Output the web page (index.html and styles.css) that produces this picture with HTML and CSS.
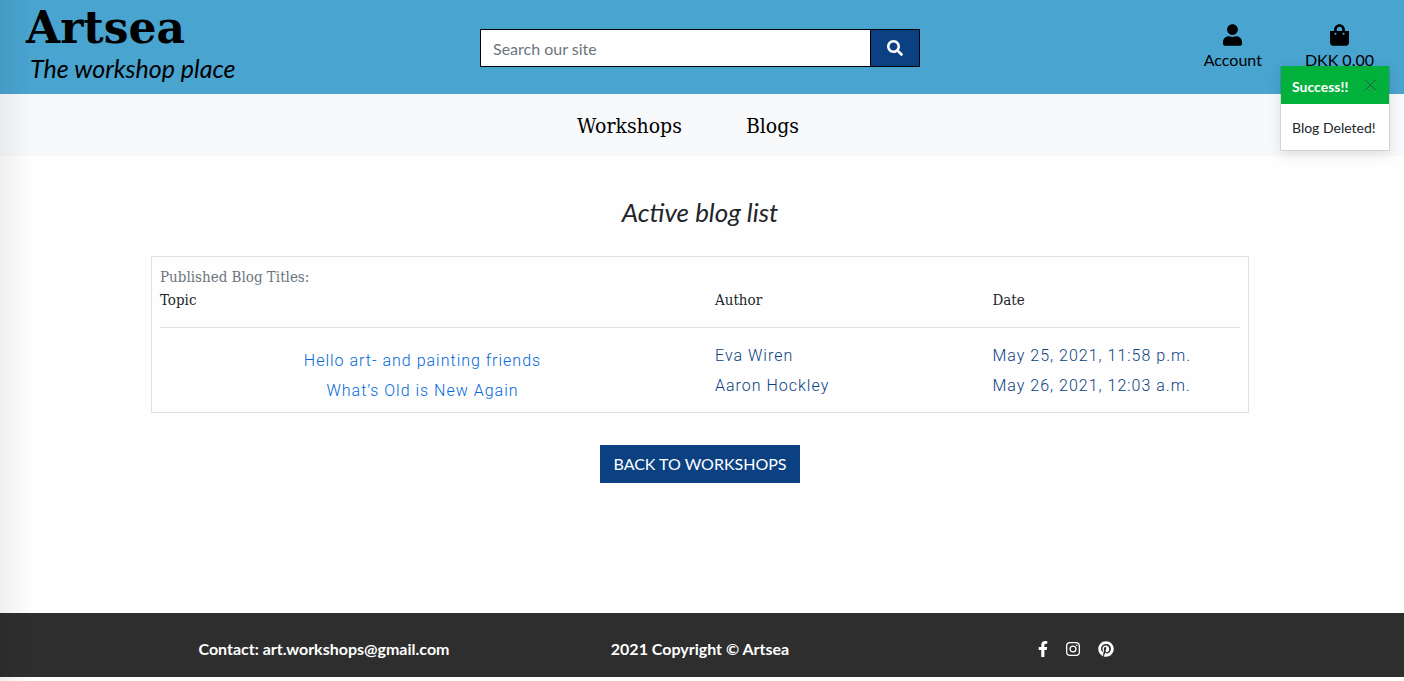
FILE: index.html
```html
<!DOCTYPE html>
<html lang="en">
<head>
<meta charset="utf-8">
<meta name="viewport" content="width=device-width, initial-scale=1">
<title>Artsea</title>
<link rel="stylesheet" href="styles.css">
</head>
<body>
<header class="header">
  <a class="brand" href="#">
    <span class="brand-name">Artsea</span>
    <span class="brand-tag">The workshop place</span>
  </a>
  <form class="search">
    <input class="search-input" type="text" placeholder="Search our site" aria-label="Search our site">
    <button class="search-button" type="submit" aria-label="Search">
      <svg width="16" height="16" viewBox="0 0 512 512" fill="currentColor"><path d="M505 442.7L405.3 343c-4.5-4.5-10.6-7-17-7H372c27.6-35.3 44-79.7 44-128C416 93.1 322.9 0 208 0S0 93.1 0 208s93.1 208 208 208c48.3 0 92.7-16.4 128-44v16.3c0 6.4 2.5 12.5 7 17l99.7 99.7c9.4 9.4 24.6 9.4 33.9 0l28.3-28.3c9.4-9.4 9.4-24.6.1-34zM208 336c-70.7 0-128-57.2-128-128 0-70.7 57.2-128 128-128 70.7 0 128 57.2 128 128 0 70.7-57.2 128-128 128z"/></svg>
    </button>
  </form>
  <div class="user-links">
    <a class="user-link" href="#">
      <svg width="19" height="22" viewBox="0 0 448 512" fill="currentColor"><path d="M224 256c70.7 0 128-57.3 128-128S294.7 0 224 0 96 57.3 96 128s57.3 128 128 128zm89.6 32h-16.7c-22.2 10.2-46.9 16-72.9 16s-50.6-5.8-72.9-16h-16.7C60.2 288 0 348.2 0 422.4V464c0 26.5 21.5 48 48 48h352c26.5 0 48-21.5 48-48v-41.6c0-74.2-60.2-134.4-134.4-134.4z"/></svg>
      Account
    </a>
    <a class="user-link" href="#">
      <svg width="19" height="22" viewBox="0 0 448 512" fill="currentColor"><path d="M352 160v-32C352 57.42 294.579 0 224 0 153.42 0 96 57.42 96 128v32H0v272c0 44.183 35.817 80 80 80h288c44.183 0 80-35.817 80-80V160h-96zm-192-32c0-35.29 28.71-64 64-64s64 28.71 64 64v32H160v-32zm160 120c-13.255 0-24-10.745-24-24s10.745-24 24-24 24 10.745 24 24-10.745 24-24 24zm-192 0c-13.255 0-24-10.745-24-24s10.745-24 24-24 24 10.745 24 24-10.745 24-24 24z"/></svg>
      DKK 0.00
    </a>
  </div>
  <div class="toast" role="status">
    <div class="toast-head">
      <strong class="toast-title">Success!!</strong>
      <button class="toast-close" type="button" aria-label="Close">
        <svg width="13" height="13" viewBox="0 0 13 13" fill="none"><path d="M1 2l11 11M12 2L1 13" stroke="#5fd088"/><path d="M1 1l11 11M12 1L1 12" stroke="#07782f" stroke-width="1.3"/></svg>
      </button>
    </div>
    <div class="toast-body">Blog Deleted!</div>
  </div>
</header>
<nav class="nav">
  <a class="nav-link" href="#">Workshops</a>
  <a class="nav-link" href="#">Blogs</a>
</nav>
<main class="main">
  <h1 class="title">Active blog list</h1>
  <section class="card">
    <h2 class="card-title">Published Blog Titles:</h2>
    <table class="blogs">
      <thead>
        <tr><th class="col-topic">Topic</th><th>Author</th><th>Date</th></tr>
      </thead>
      <tbody>
        <tr class="rule-row"><td colspan="3"><hr class="rule"></td></tr>
        <tr>
          <td class="topic"><a class="topic-link" href="#">Hello art- and painting friends</a></td>
          <td>Eva Wiren</td>
          <td>May 25, 2021, 11:58 p.m.</td>
        </tr>
        <tr>
          <td class="topic"><a class="topic-link" href="#">What’s Old is New Again</a></td>
          <td>Aaron Hockley</td>
          <td>May 26, 2021, 12:03 a.m.</td>
        </tr>
      </tbody>
    </table>
  </section>
  <a class="back" href="#">BACK TO WORKSHOPS</a>
</main>
<footer class="footer">
  <div class="footer-row">
    <p class="footer-text">Contact: art.workshops@gmail.com</p>
    <p class="footer-text">2021 Copyright © Artsea</p>
    <div class="social">
      <a class="social-link" href="#" aria-label="Facebook"><svg width="10" height="16" viewBox="0 0 320 512" fill="currentColor"><path d="M279.14 288l14.22-92.66h-88.91v-60.13c0-25.35 12.42-50.06 52.24-50.06h40.42V6.26S260.43 0 225.36 0c-73.22 0-121.08 44.38-121.08 124.72v70.62H22.89V288h81.39v224h100.17V288z"/></svg></a>
      <a class="social-link" href="#" aria-label="Instagram"><svg width="14" height="16" viewBox="0 0 448 512" fill="none" stroke="currentColor" stroke-width="42"><rect x="21" y="53" width="406" height="406" rx="108"/><circle cx="224" cy="256" r="94"/><circle cx="343" cy="137" r="26" fill="currentColor" stroke="none"/></svg></a>
      <a class="social-link" href="#" aria-label="Pinterest"><svg width="16" height="16" viewBox="0 0 496 512" fill="currentColor"><path d="M496 256c0 137-111 248-248 248-25.6 0-50.2-3.9-73.4-11.1 10.1-16.5 25.2-43.5 30.8-65 3-11.6 15.4-59 15.4-59 8.1 15.4 31.7 28.5 56.8 28.5 74.8 0 128.7-68.8 128.7-154.3 0-81.9-66.9-143.2-152.9-143.2-107 0-163.9 71.8-163.9 150.1 0 36.4 19.4 81.7 50.3 96.1 4.7 2.2 7.2 1.2 8.3-3.3.8-3.4 5-20.3 6.9-28.1.6-2.5.3-4.7-1.7-7.1-10.1-12.5-18.3-35.3-18.3-56.6 0-54.7 41.4-107.6 112-107.6 60.9 0 103.6 41.5 103.6 100.9 0 67.1-33.9 113.6-78 113.6-24.3 0-42.6-20.1-36.7-44.8 7-29.5 20.5-61.3 20.5-82.6 0-19-10.2-34.9-31.4-34.9-24.9 0-44.9 25.7-44.9 60.2 0 22 7.4 36.8 7.4 36.8s-24.5 103.8-29 123.2c-5 21.4-3 51.6-.9 71.2C65.4 450.9 0 361.1 0 256 0 119 111 8 248 8s248 111 248 248z"/></svg></a>
    </div>
  </div>
</footer>
</body>
</html>
```

FILE: styles.css
```css
* { box-sizing: border-box; }

body {
  position: relative;
  display: flex;
  flex-direction: column;
  min-height: 100vh;
  margin: 0;
  padding-bottom: 4px;
  background: #fefefe;
  color: #212529;
  font: 16px/24px Lato, "Liberation Sans", sans-serif;
}

/* soft shade along the left edge of the window */
body::after {
  content: "";
  position: absolute;
  inset: 0 auto 0 0;
  width: 32px;
  background: linear-gradient(to right, rgba(0, 0, 0, .06), rgba(0, 0, 0, 0));
  pointer-events: none;
}

a { color: inherit; text-decoration: none; }
svg { display: block; }

.header {
  position: relative;
  display: grid;
  grid-template-columns: 1fr minmax(200px, 440px) 1fr;
  align-items: center;
  min-height: 94px;
  padding: 2px 30px 0 26px;
  background: #49a4d0;
  color: #000;
}

.brand { display: flex; flex-direction: column; }
.brand-name { font: bold 44px/40px "DejaVu Serif", serif; }
.brand-tag { padding-left: 4px; font: italic 25px/40px Lato, sans-serif; }

.search { display: flex; height: 38px; border: 1px solid #000; }
.search-input {
  flex: 1;
  min-width: 0;
  padding: 2px 12px 0;
  border: 0;
  background: #fff;
  font: inherit;
}
.search-input::placeholder { color: #6c757d; opacity: 1; }
.search-button {
  display: grid;
  place-items: center;
  width: 49px;
  padding: 0;
  border: 0;
  border-left: 1px solid #000;
  background: #0b4182;
  color: #fff;
}

.user-links { display: flex; justify-content: flex-end; gap: 43px; }
.user-link {
  display: flex;
  flex-direction: column;
  align-items: center;
  gap: 2px;
}

.toast {
  position: absolute;
  top: 66px;
  right: 14px;
  z-index: 1;
  width: 110px;
  border: 1px solid rgba(0, 0, 0, .1);
  border-top: 0;
  background: #fff;
  background-clip: padding-box;
  box-shadow: 0 4px 12px rgba(0, 0, 0, .1);
  font-size: 14px;
  line-height: 21px;
}
.toast-head {
  display: flex;
  align-items: center;
  justify-content: space-between;
  height: 38px;
  padding: 2px 12px 0 11px;
  background: #02b03c;
  color: #fff;
}
.toast-close { padding: 0 0 2px; border: 0; background: none; }
.toast-body { padding: 13px 0 12px 11px; color: #212529; white-space: nowrap; }

.nav {
  display: flex;
  justify-content: center;
  gap: 64px;
  padding: 18px 28px 16px 0;
  background: #f8f9fb;
}
.nav-link {
  color: #000;
  font: 21px/28px "DejaVu Serif Condensed", "DejaVu Serif", serif;
}

.main {
  flex: 1;
  display: flex;
  flex-direction: column;
  align-items: center;
  padding: 38px 28px 38px 24px;
}
.title { margin: 0 0 26px; font: italic 26px/36px Lato, sans-serif; }

.card {
  width: 100%;
  max-width: 1098px;
  margin-bottom: 32px;
  padding: 9px 8px 11px;
  border: 1px solid #dee2e6;
}
.card-title,
.blogs th {
  margin: 0;
  font: 15px/23px "DejaVu Serif Condensed", "DejaVu Serif", serif;
}
.card-title { color: #6c757d; }

.blogs {
  width: calc(100% + 30px);
  margin: 0 -15px;
  border-collapse: collapse;
  table-layout: fixed;
}
.blogs th { padding: 0 15px; text-align: left; }
.col-topic { width: 50%; }
.blogs td {
  padding: 5px 15px;
  color: #0b4182;
  font: 300 16px/20px Roboto, sans-serif;
  letter-spacing: 1px;
}
.blogs .rule-row td { padding: 15px 15px 13px; }
.rule { margin: 0; border: 0; border-top: 1px solid #e2e3e4; }
.blogs .topic { padding: 10px 15px 0; text-align: center; }
.topic-link { color: #0068dc; }

.back {
  padding: 7px 13px;
  background: #0b4182;
  color: #fff;
}

.footer {
  padding: 24px 4px 16px 0;
  background: #2e2e2e;
  color: #fff;
}
.footer-row {
  display: grid;
  grid-template-columns: repeat(3, 1fr);
  justify-items: center;
  align-items: center;
  max-width: 1128px;
  margin: 0 auto;
}
.footer-text { margin: 0; font-weight: 700; }
.social { display: flex; gap: 18px; }
```
